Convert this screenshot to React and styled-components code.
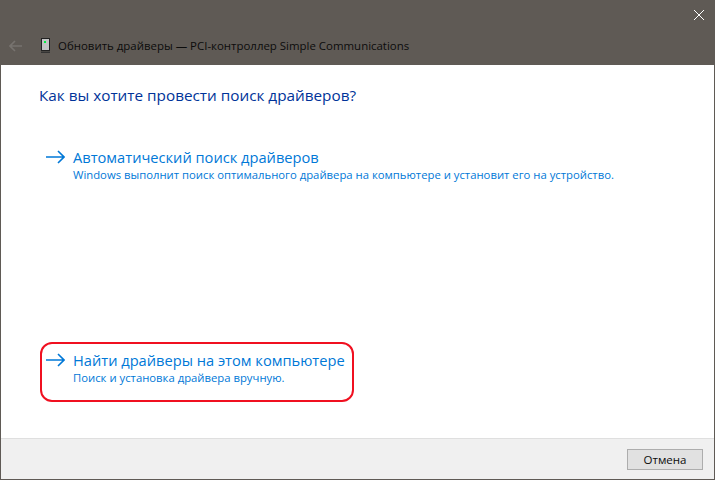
import React from "react";
import styled, { createGlobalStyle } from "styled-components";

const Global = createGlobalStyle`
  html, body { margin: 0; padding: 0; background: #fff; }
  body { font-family: "Open Sans", "Noto Sans", sans-serif; }
`;

const Win = styled.div`
  width: 715px;
  height: 480px;
  box-sizing: border-box;
  display: flex;
  flex-direction: column;
  border: 1px solid #5f5a55;
  border-top: none;
  background: #fff;
  overflow: hidden;
`;
const TitleBar = styled.header`
  height: 65px;
  flex: none;
  background: #5f5a55;
  display: flex;
  flex-direction: column;
  margin: 0 -1px;
`;
const CloseRow = styled.div`
  height: 31px;
  box-sizing: border-box;
  display: flex;
  justify-content: flex-end;
  align-items: flex-start;
  padding: 10px 11px 0 0;
`;
const NavRow = styled.div`
  display: flex;
  align-items: center;
  height: 29px;
  padding-left: 9px;
`;
const Back = styled.svg`
  width: 13px;
  height: 12px;
  margin-right: 19px;
`;
const DevIcon = styled.svg`
  width: 9px;
  height: 15px;
  margin-right: 8px;
`;
const WinTitle = styled.div`
  font-size: 11.45px;
  color: #0c0c0c;
  white-space: nowrap;
`;
const Content = styled.main`
  flex: 1;
  padding: 18px 0 0 38px;
  display: flex;
  flex-direction: column;
`;
const Question = styled.h1`
  margin: 0;
  font-weight: 400;
  font-size: 15.3px;
  line-height: 24px;
  color: #003399;
`;
const Options = styled.div`
  flex: 1;
  display: flex;
  flex-direction: column;
  justify-content: space-between;
  padding: 40px 0 52px 1px;
`;
const Option = styled.a`
  position: relative;
  display: flex;
  align-items: flex-start;
  gap: 8px;
  padding-left: 6px;
`;
const Arrow = styled.svg`
  width: 19px;
  height: 14px;
  flex: none;
  margin-top: 3px;
`;
const OptText = styled.div`
  display: flex;
  flex-direction: column;
`;
const OptTitle = styled.div`
  font-size: 14.65px;
  line-height: 20px;
  color: #0078d7;
  white-space: nowrap;
`;
const OptDesc = styled.div`
  font-size: 11.3px;
  line-height: 16px;
  color: #0078d7;
  white-space: nowrap;
`;
const Highlight = styled.span`
  position: absolute;
  left: 0;
  top: -8px;
  box-sizing: border-box;
  width: 314px;
  height: 60px;
  border: 2px solid #f01020;
  border-radius: 12px;
`;
const Footer = styled.footer`
  height: 41px;
  box-sizing: border-box;
  flex: none;
  background: #f0f0f0;
  border-top: 1px solid #dfdfdf;
  display: flex;
  justify-content: flex-end;
  align-items: center;
  padding-right: 11px;
`;
const Cancel = styled.button`
  width: 76px;
  height: 21px;
  padding: 0;
  border: 1px solid #adadad;
  background: #e1e1e1;
  font-family: inherit;
  font-size: 11.5px;
  color: #0c0c0c;
`;

const ArrowIcon = () => (
  <Arrow viewBox="0 0 19 14" fill="none" stroke="#0078d7" strokeWidth="1.6">
    <path d="M0 7h18M12 1l6 6-6 6" />
  </Arrow>
);

export default function App() {
  return (
    <>
      <Global />
      <Win>
        <TitleBar>
          <CloseRow>
            <svg width="10" height="10" viewBox="0 0 10 10" stroke="#fff" strokeWidth="1">
              <path d="M0 0l10 10M10 0L0 10" />
            </svg>
          </CloseRow>
          <NavRow>
            <Back viewBox="0 0 13 12" fill="none" stroke="#77736f" strokeWidth="1.6">
              <path d="M13 6H1M6 1L1 6l5 5" />
            </Back>
            <DevIcon viewBox="0 0 9 15">
              <rect x="0.5" y="0.5" width="8" height="12" fill="#c4c4c4" stroke="#222" />
              <rect x="3" y="3" width="2" height="2" fill="#00f040" />
              <rect x="0" y="13.5" width="9" height="1.5" fill="#333" />
            </DevIcon>
            <WinTitle>Обновить драйверы — PCI-контроллер Simple Communications</WinTitle>
          </NavRow>
        </TitleBar>
        <Content>
          <Question>Как вы хотите провести поиск драйверов?</Question>
          <Options>
            <Option>
              <ArrowIcon />
              <OptText>
                <OptTitle>Автоматический поиск драйверов</OptTitle>
                <OptDesc>Windows выполнит поиск оптимального драйвера на компьютере и установит его на устройство.</OptDesc>
              </OptText>
            </Option>
            <Option>
              <Highlight />
              <ArrowIcon />
              <OptText>
                <OptTitle>Найти драйверы на этом компьютере</OptTitle>
                <OptDesc>Поиск и установка драйвера вручную.</OptDesc>
              </OptText>
            </Option>
          </Options>
        </Content>
        <Footer>
          <Cancel>Отмена</Cancel>
        </Footer>
      </Win>
    </>
  );
}
